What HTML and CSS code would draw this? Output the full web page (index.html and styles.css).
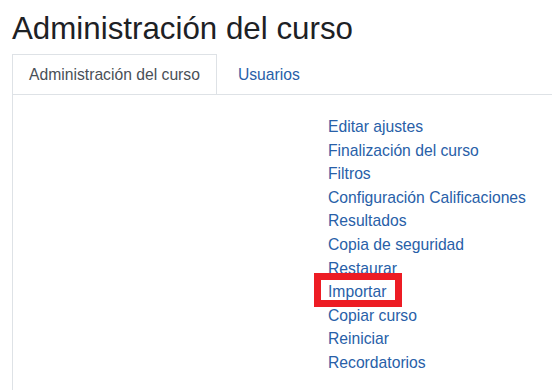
FILE: index.html
```html
<!DOCTYPE html>
<html lang="es">
<head>
<meta charset="utf-8">
<title>Administración del curso</title>
<link rel="stylesheet" href="styles.css">
</head>
<body>
<div class="page">
  <h1 class="page-title">Administración del curso</h1>
  <ul class="tabs">
    <li class="tab tab-active">Administración del curso</li>
    <li class="tab"><a href="#">Usuarios</a></li>
  </ul>
  <div class="panel">
    <div class="panel-head"></div>
    <ul class="links">
      <li><a href="#">Editar ajustes</a></li>
      <li><a href="#">Finalización del curso</a></li>
      <li><a href="#">Filtros</a></li>
      <li><a href="#">Configuración Calificaciones</a></li>
      <li><a href="#">Resultados</a></li>
      <li><a href="#">Copia de seguridad</a></li>
      <li><a href="#">Restaurar</a></li>
      <li><span class="marked"><a href="#">Importar</a><span class="mark-box"></span></span></li>
      <li><a href="#">Copiar curso</a></li>
      <li><a href="#">Reiniciar</a></li>
      <li><a href="#">Recordatorios</a></li>
    </ul>
  </div>
</div>
</body>
</html>
```

FILE: styles.css
```css
html, body {
  margin: 0;
  padding: 0;
  background: #ffffff;
}

body {
  font-family: "Liberation Sans", Arial, sans-serif;
  font-size: 15.7px;
  line-height: 1.5;
  color: #1d2125;
  overflow: hidden;
}

a {
  color: #2860a8;
  text-decoration: none;
}

.page {
  padding: 0 0 0 12px;
}

.page-title {
  margin: 0;
  padding-top: 10px;
  font-size: 31.3px;
  font-weight: 400;
  line-height: 1.2;
  color: #1d2125;
}

.tabs {
  list-style: none;
  margin: 6.5px 0 0 0;
  padding: 0;
  display: flex;
  border-bottom: 1px solid #dee2e6;
}

.tab {
  padding: 7.5px 16px;
  border: 1px solid transparent;
  border-bottom: 0;
  color: #495057;
}

.tab + .tab {
  padding-left: 20px;
}

.tab-active {
  border-color: #dee2e6;
}

.panel {
  border-left: 1px solid #dee2e6;
  padding: 20.5px 0 20px 0;
  display: grid;
  grid-template-columns: 315px 1fr;
}

.links {
  list-style: none;
  margin: 0;
  padding: 0;
}

.links li {
  height: 23.6px;
}

.marked {
  position: relative;
  display: inline-block;
}

.mark-box {
  position: absolute;
  top: -7px;
  bottom: -3.5px;
  left: -14px;
  right: -15.5px;
  border: 7px solid #ed1c24;
  pointer-events: none;
}
```
